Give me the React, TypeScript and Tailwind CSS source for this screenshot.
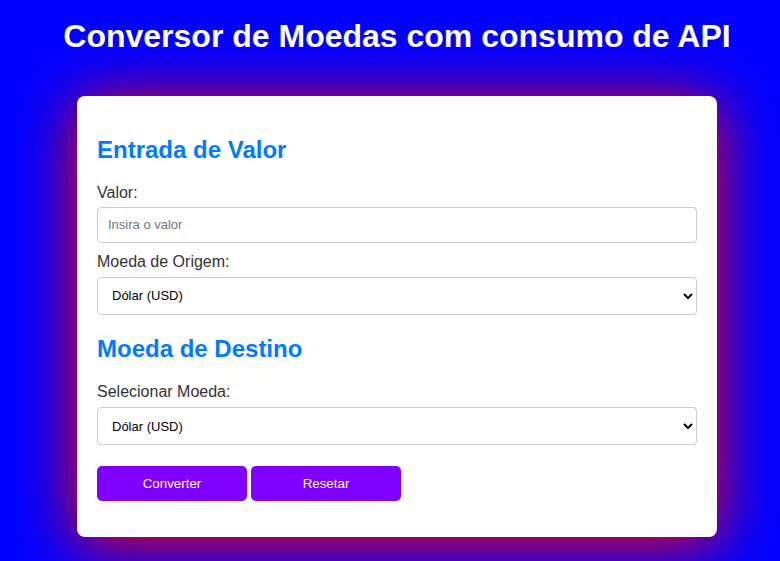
export default function App() {
  return (
    <div className="min-h-screen bg-[#0000ff] pl-[14px] flex flex-col items-center font-['Liberation_Sans',Arial,sans-serif]">
      <h1 className="mt-[18px] text-[32px] leading-[37px] font-bold text-white">
        Conversor de Moedas com consumo de API
      </h1>
      <div className="mt-[41px] w-[640px] rounded-[8px] bg-white px-5 pt-5 pb-[36px] shadow-[0_6px_60px_#ff0000]">
        <h2 className="mt-[20px] mb-[20px] text-[24px] leading-[27.6px] font-bold text-[#007bff]">
          Entrada de Valor
        </h2>
        <label className="block text-[16px] leading-[18px] text-[#333] mb-[5px]">Valor:</label>
        <input
          type="text"
          placeholder="Insira o valor"
          className="block w-full h-[36px] px-[10px] border border-[#ccc] rounded-[4px] text-[13px] text-black placeholder:text-[#757575] mb-[10px] outline-none"
        />
        <label className="block text-[16px] leading-[18px] text-[#333] mb-[6px]">Moeda de Origem:</label>
        <select
          defaultValue="USD"
          className="block w-full h-[38px] px-[10px] border border-[#ccc] rounded-[4px] text-[13px] text-black bg-white outline-none"
        >
          <option value="USD">Dólar (USD)</option>
          <option value="EUR">Euro (EUR)</option>
          <option value="BRL">Real (BRL)</option>
        </select>
        <h2 className="mt-[20px] mb-[21px] text-[24px] leading-[27.6px] font-bold text-[#007bff]">
          Moeda de Destino
        </h2>
        <label className="block text-[16px] leading-[18px] text-[#333] mb-[6px]">Selecionar Moeda:</label>
        <select
          defaultValue="USD"
          className="block w-full h-[38px] px-[10px] border border-[#ccc] rounded-[4px] text-[13px] text-black bg-white outline-none"
        >
          <option value="USD">Dólar (USD)</option>
          <option value="EUR">Euro (EUR)</option>
          <option value="BRL">Real (BRL)</option>
        </select>
        <div className="mt-[21px] flex gap-[4px]">
          <button className="w-[150px] h-[35px] rounded-[5px] bg-[#8000ff] text-white text-[13.33px]">Converter</button>
          <button className="w-[150px] h-[35px] rounded-[5px] bg-[#8000ff] text-white text-[13.33px]">Resetar</button>
        </div>
      </div>
    </div>
  );
}
